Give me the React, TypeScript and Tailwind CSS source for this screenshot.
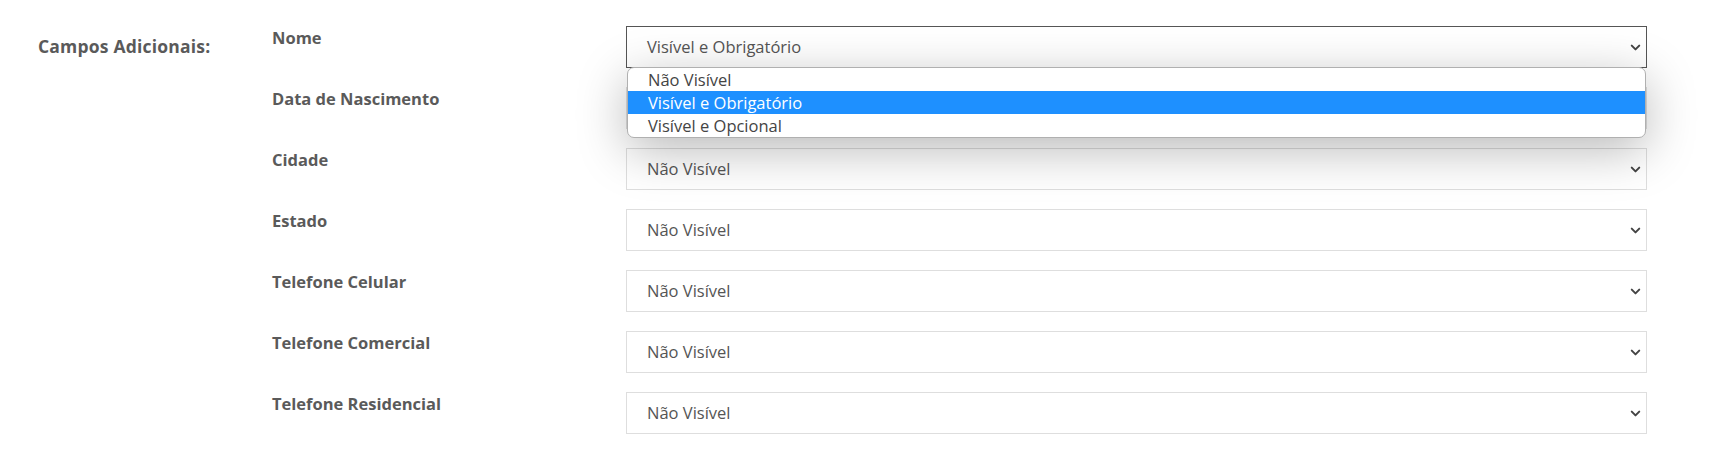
import { ChevronDown } from 'lucide-react';

const fields = [
  { label: 'Nome', value: 'Visível e Obrigatório', open: true },
  { label: 'Data de Nascimento', value: 'Não Visível' },
  { label: 'Cidade', value: 'Não Visível' },
  { label: 'Estado', value: 'Não Visível' },
  { label: 'Telefone Celular', value: 'Não Visível' },
  { label: 'Telefone Comercial', value: 'Não Visível' },
  { label: 'Telefone Residencial', value: 'Não Visível' },
];

const options = ['Não Visível', 'Visível e Obrigatório', 'Visível e Opcional'];

function Dropdown({ value, open }: { value: string; open?: boolean }) {
  return (
    <div className="relative">
      <div
        className={`flex h-[42px] items-center justify-between bg-white pl-[20px] pr-[3px] text-[16.5px] text-[#555] border ${
          open ? 'border-[#555]' : 'border-[#dedede]'
        }`}
      >
        <span>{value}</span>
        <ChevronDown className="h-[15px] w-[15px] text-[#444]" strokeWidth={3.2} />
      </div>
      {open && (
        <div className="absolute left-px right-px top-[41px] z-10 overflow-hidden rounded-[7px] border border-[#b0b0b0] bg-white shadow-[0_12px_50px_rgba(0,0,0,0.28)]">
          {options.map((o) => (
            <div
              key={o}
              className={`h-[23px] pl-[20px] text-[16.5px] leading-[23px] ${
                o === value ? 'bg-[#1e90ff] text-white' : 'text-[#444]'
              }`}
            >
              {o}
            </div>
          ))}
        </div>
      )}
    </div>
  );
}

export default function App() {
  return (
    <div className="h-[470px] bg-white font-['Open_Sans','Lato',sans-serif]">
      <div className="flex pt-[26px] pl-[38px] pr-[75px]">
        <div className="w-[234px] pt-[7px] text-[17.5px] font-bold tracking-[0.2px] text-[#5a5a5a]">Campos Adicionais:</div>
        <div className="flex flex-1 flex-col gap-[19px]">
          {fields.map((f) => (
            <div key={f.label} className="flex">
              <div className="w-[354px] text-[16.5px] font-bold text-[#5a5a5a]">{f.label}</div>
              <div className="flex-1">
                <Dropdown value={f.value} open={f.open} />
              </div>
            </div>
          ))}
        </div>
      </div>
    </div>
  );
}
